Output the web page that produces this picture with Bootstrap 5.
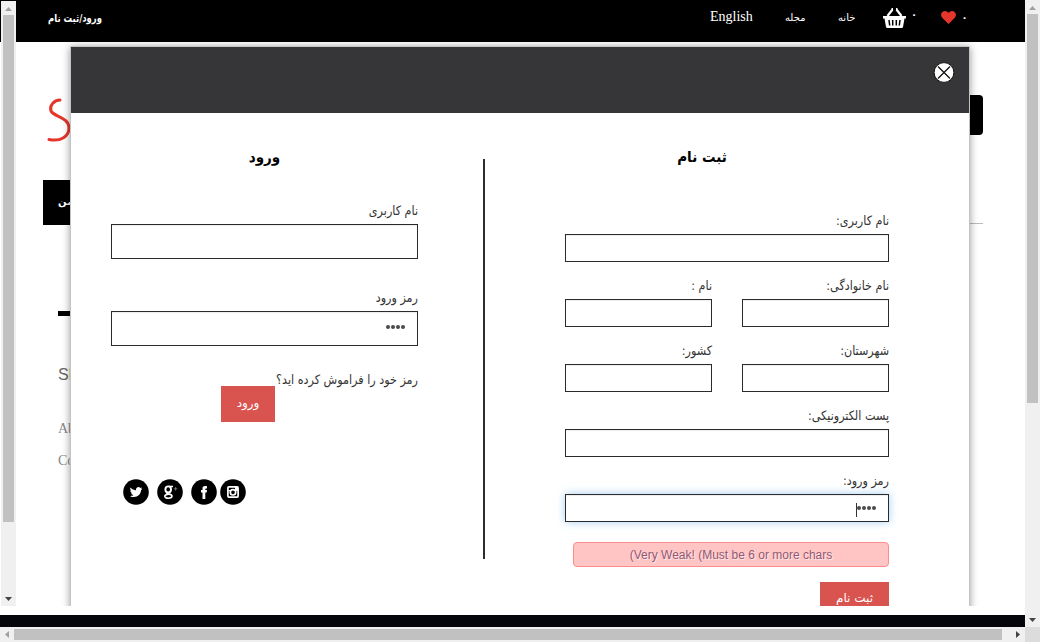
<!DOCTYPE html>
<html lang="fa">
<head>
<meta charset="utf-8">
<meta name="viewport" content="width=device-width, initial-scale=1">
<title>ورود/ثبت نام</title>
<link href="https://cdn.jsdelivr.net/npm/bootstrap@5.3.0/dist/css/bootstrap.min.css" rel="stylesheet">
<style>
body{width:1040px;height:642px;font:14px/20px "Liberation Serif","DejaVu Sans",serif;color:#333;background:#fff}
.fa{font-family:"DejaVu Sans",sans-serif;font-size:12px;direction:rtl;white-space:nowrap}
.screen{width:1025px;height:627px}
.topbar{height:42px;background:#000;color:#fff;padding-left:48px}
.topbar .fa{font-size:10px}
.topbar .signin{font-size:11px;direction:rtl;width:54px;margin-right:608px;transform:scaleX(.77);transform-origin:right;display:flex}
.site{padding-left:43px;width:983px;height:573px}
.search-btn{width:60px;height:40px;border-radius:4px;background:#000;margin-top:53px}
.logo{width:60px;height:50px;margin:55px 0 0 3px}
.menu-tab{width:100px;height:45px;background:#000;color:#fff;padding-left:15px}
.menu-row{margin-top:45px;border-bottom:1px solid #bbb;height:44px}
.dash{width:80px;height:5px;background:#000;margin:87px 0 0 15px}
.side-links{margin:49px 0 0 15px;color:#888}
.side-links h6{font:16px/20px "Liberation Sans",sans-serif;color:#666;margin:0 0 34px}
.side-links p{margin:0 0 12px}
.footer-bar{height:12px;background:#05060b}
.layer{inset:0 0 auto 0;height:606px;padding:46px 0 0 70px}
.dialog{width:900px;height:700px;border:1px solid #c4c4c4;background:#fff;box-shadow:0 1px 8px rgba(0,0,0,.4)}
.dialog-head{height:66px;background:#363638;padding:0 14px}
.dialog-body{padding:46px 79px 0 40px}
.login-col{width:307px;margin-right:65px}
.rule{width:2px;height:400px;background:#2d2d30;margin-right:80px}
.join-col{width:324px}
.title{font-size:15px;line-height:24px;font-weight:700;color:#000;margin:-14px 0 0;transform:scaleX(.9)}
.box{border:1px solid #2b2b2d;border-radius:0;padding:0 12px;direction:rtl;box-shadow:inset 0 1px 1px rgba(0,0,0,.075);background:#fff}
.login-col .box{height:35px;min-height:35px}
.join-col .box{height:28px;min-height:28px}
.box.active{box-shadow:inset 0 1px 1px rgba(0,0,0,.075),0 0 8px rgba(102,175,233,.6)}
.dots{display:flex;gap:1px;margin-top:-3px}
.join-col .dots{margin-top:-1px}
.dots i{width:4px;height:4px;border-radius:50%;background:#4a4a4a}
.caret{width:1px;height:14px;background:#333;margin-top:3px}
.lab{height:20px;margin-bottom:2px;line-height:18px;font-size:13px;transform:scaleX(.86);transform-origin:right}
.join-col .pair{gap:30px}
.join-col .grp{margin-bottom:15px}
.red{background:#d9534f;color:#fff;border:0;border-radius:0;padding:0 0 3px;font-size:12px;line-height:20px}
.weak{width:316px;height:25px;border:1px solid #ff8c8c;border-radius:4px;background:#ffc4c4;color:#945870;font:12px/24px "Liberation Sans",sans-serif;text-shadow:1px 1px 1px rgba(255,255,255,.7)}
.sb{background:#f0f0f0}
.thumb{background:#c1c1c1}
.sb-inner{left:1px;top:1px;width:15px;height:605px}
.sb-v{width:15px;height:627px}
.sb-h{height:15px}
.corner{width:15px;height:15px;background:#dcdcdc}
svg{display:block;flex:none}
</style>
</head>
<body class="overflow-hidden d-flex flex-column m-0">
<div class="d-flex">
  <main class="screen position-relative overflow-hidden d-flex flex-column">
    <header class="topbar d-flex align-items-start flex-shrink-0">
      <a class="fa signin fw-bold text-white text-decoration-none" style="margin-top:9px">ورود/ثبت نام</a>
      <nav class="d-flex align-items-start" style="padding-top:7px">
        <span style="width:75px">English</span>
        <span class="fa text-start" style="width:53px;padding-top:1px">مجله</span>
        <span class="fa text-start" style="width:45px;padding-top:1px">خانه</span>
        <svg width="23" height="20" viewBox="0 0 23 20" style="margin-top:1px"><path d="M0 8H23V10.500H21.500L20 19Q19.800 20 18.500 20H4.500Q3.200 20 3 19L1.500 10.500H0Z" fill="#fff"/><path d="M4.500 8L9.500 1.500M18.500 8L13.500 1.500M8.500 1H10M13 1H14.500" stroke="#fff" stroke-width="2.200"/><path d="M6 12L6.700 17.500M9.700 12V17.500M13.300 12V17.500M17 12L16.300 17.500" stroke="#000" stroke-width="1.500"/></svg>
        <span class="fa text-center fw-bold" style="width:16px;margin-top:-2px">۰</span>
        <svg width="15" height="13" viewBox="0 0 15 13" style="margin:4px 0 0 19px"><path d="M7.500 13L1.200 6.800C-1.500 3.500 1 0 4 0C5.700 0 6.900 1 7.500 2C8.100 1 9.300 0 11 0C14 0 16.500 3.500 13.800 6.800Z" fill="#e6352b"/></svg>
        <span class="fa text-center fw-bold" style="width:17px;margin-top:1px">۰</span>
      </nav>
    </header>
    <section class="site flex-shrink-0">
      <div class="d-flex justify-content-between" style="height:93px">
        <svg class="logo" viewBox="0 0 60 50"><path d="M14 3C8 3 3 9 5 14C8 20 23 20 23 31C23 39 15 45 3 42.500" fill="none" stroke="#e6352b" stroke-width="3" stroke-linecap="round"/></svg>
        <div class="search-btn"></div>
      </div>
      <div class="menu-row"><div class="menu-tab d-flex align-items-center"><span class="fa fw-bold" style="font-size:10px;margin-top:-2px">ثمن</span></div></div>
      <div class="dash"></div>
      <div class="side-links"><h6>Sh</h6><p>Ab</p><p>Co</p></div>
    </section>
    <div class="footer-bar"></div>

    <div class="layer position-absolute overflow-hidden">
      <section class="dialog">
        <div class="dialog-head d-flex justify-content-end">
          <svg width="22" height="22" viewBox="0 0 22 22" style="margin-top:14px"><circle cx="11" cy="11.500" r="9.900" fill="#fff" stroke="#111" stroke-width="1"/><path d="M5 5.500L17 17.500M17 5.500L5 17.500" stroke="#111" stroke-width="1.300"/></svg>
        </div>
        <div class="dialog-body d-flex">
          <div class="login-col">
            <h2 class="title fa text-center">ورود</h2>
            <div class="lab fa" style="margin-top:33px">نام کاربری</div>
            <div class="box"></div>
            <div class="lab fa" style="margin-top:30px">رمز ورود</div>
            <div class="box d-flex align-items-center"><span class="dots"><i></i><i></i><i></i><i></i></span></div>
            <div class="lab fa mb-0" style="margin-top:24px;line-height:20px">رمز خود را فراموش کرده اید؟</div>
            <button class="btn red fa d-block" style="width:54px;height:36px;margin:-4px 0 0 110px">ورود</button>
            <div class="d-flex" style="margin:57px 0 0 12px">
              <svg width="26" height="26" viewBox="0 0 26 26"><circle cx="13" cy="13" r="12.800"/><path fill="#fff" d="M7.500 8.500C9 10.300 11 11.200 13 11.200C12.600 8.700 15.500 7 17.300 9L19 8.500L18.200 10L19.400 9.800L18 11.300C18 16 13 19.800 7 17.200C8.500 17.200 9.600 16.800 10.500 16C9.200 15.900 8.500 15.200 8.200 14.200L9.200 14.100C8 13.500 7.300 12.700 7.300 11.400L8.300 11.700C7.200 10.700 7 9.700 7.500 8.500Z"/></svg>
              <svg width="26" height="26" viewBox="0 0 26 26" style="margin-left:8px"><circle cx="13" cy="13" r="12.800"/><g fill="none" stroke="#fff"><ellipse cx="11.200" cy="10.400" rx="2.800" ry="3" stroke-width="1.900"/><path d="M12 7.500H16M10.500 13.200C7 15 15 14.500 15 17C15 19.900 7.500 19.900 7.800 17.200C8 15.500 11 15.400 12 15.300" stroke-width="1.600"/><path d="M16.800 9.800H20.400M18.600 8V11.600" stroke="#888" stroke-width=".8"/></g></svg>
              <svg width="26" height="26" viewBox="0 0 26 26" style="margin-left:8px"><circle cx="13" cy="13" r="12.800"/><path fill="#fff" d="M11.500 20V13.500H10V11H11.500V9.500C11.500 7.500 12.700 6.800 16 7.200V9.500C14.500 9.400 14.300 9.500 14.300 11H16L15.700 13.500H14.300V20Z"/></svg>
              <svg width="26" height="26" viewBox="0 0 26 26" style="margin-left:3px"><circle cx="13" cy="13" r="12.800"/><g fill="none" stroke="#fff" stroke-width="1.700"><rect x="7.900" y="7.900" width="10.200" height="10.200" rx="1"/><circle cx="13" cy="13.300" r="2.700"/><path d="M8 11.600H10.500M15.500 11.600H18" stroke-width="1"/></g><path fill="#fff" d="M15 8H18V11H15Z"/></svg>
            </div>
          </div>
          <div class="rule"></div>
          <form class="join-col">
            <h2 class="title fa text-center" style="margin-right:50px">ثبت نام</h2>
            <div class="grp" style="margin-top:43px"><div class="lab fa">نام کاربری:</div><div class="box"></div></div>
            <div class="grp pair d-flex">
              <div class="flex-fill w-50"><div class="lab fa">نام :</div><div class="box"></div></div>
              <div class="flex-fill w-50"><div class="lab fa">نام خانوادگی:</div><div class="box"></div></div>
            </div>
            <div class="grp pair d-flex">
              <div class="flex-fill w-50"><div class="lab fa">کشور:</div><div class="box"></div></div>
              <div class="flex-fill w-50"><div class="lab fa">شهرستان:</div><div class="box"></div></div>
            </div>
            <div class="grp"><div class="lab fa">پست الکترونیکی:</div><div class="box"></div></div>
            <div class="grp"><div class="lab fa">رمز ورود:</div><div class="box active d-flex align-items-center"><span class="dots"><i></i><i></i><i></i><i></i></span><span class="caret"></span></div></div>
            <div class="weak text-center ms-auto" style="margin-top:20px">(Very Weak! (Must be 6 or more chars</div>
            <button type="button" class="btn red fa d-block ms-auto" style="width:69px;height:34px;margin-top:15px">ثبت نام</button>
          </form>
        </div>
      </section>
    </div>

    <div class="sb sb-inner position-absolute">
      <svg width="15" height="14" viewBox="0 0 15 14"><path d="M4 10H11L7.500 6Z" fill="#a0a0a0"/></svg>
      <div class="thumb" style="margin-left:2px;width:11px;height:507px"></div>
      <svg width="15" height="14" viewBox="0 0 15 14" style="margin-top:69px"><path d="M4 6H11L7.500 10Z" fill="#444"/></svg>
    </div>
  </main>
  <div class="sb sb-v">
    <svg width="15" height="14" viewBox="0 0 15 14"><path d="M4 10H11L7.500 6Z" fill="#a0a0a0"/></svg>
    <div class="thumb" style="margin-left:2px;width:11px;height:389px"></div>
    <svg width="15" height="14" viewBox="0 0 15 14" style="margin-top:208px"><path d="M4 7H11L7.500 11Z" fill="#444"/></svg>
  </div>
</div>
<div class="d-flex">
  <div class="sb sb-h d-flex align-items-center" style="width:1025px">
    <svg width="14" height="15" viewBox="0 0 14 15"><path d="M9 4V11L5 7.500Z" fill="#a0a0a0"/></svg>
    <div class="thumb" style="width:988px;height:11px"></div>
    <svg width="14" height="15" viewBox="0 0 14 15" style="margin-left:9px"><path d="M5 4V11L9 7.500Z" fill="#444"/></svg>
  </div>
  <div class="corner"></div>
</div>
<script src="https://cdn.jsdelivr.net/npm/bootstrap@5.3.0/dist/js/bootstrap.bundle.min.js"></script>
</body>
</html>
